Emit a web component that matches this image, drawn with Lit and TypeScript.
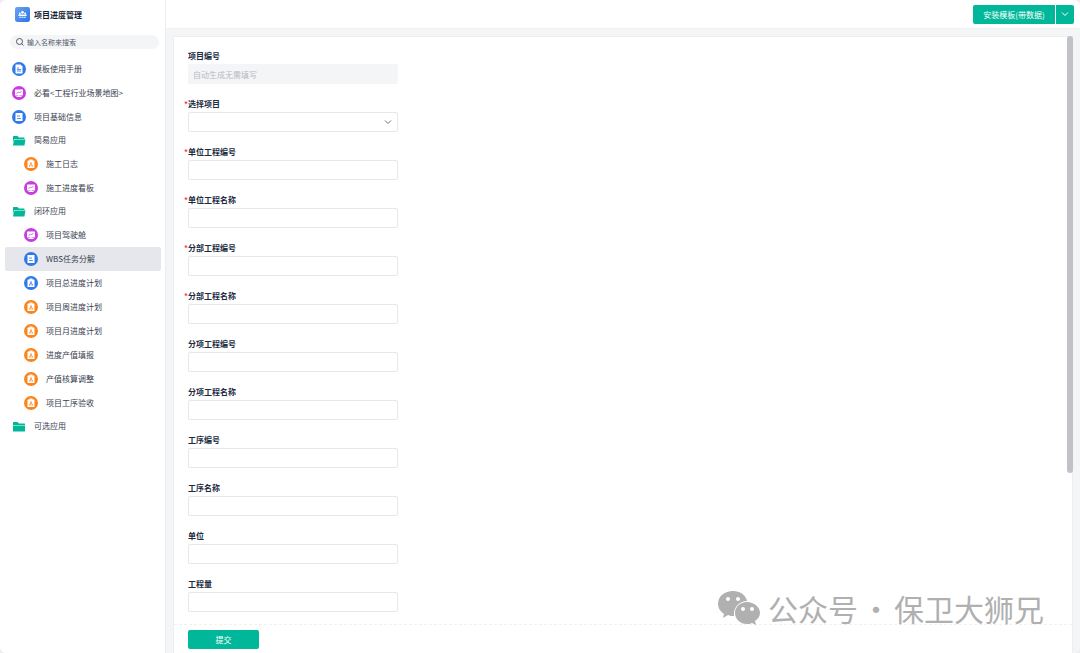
import { LitElement, html, svg, css } from "lit";
import { customElement, property, state } from "lit/decorators.js";
import { classMap } from "lit/directives/class-map.js";

type IconKind = "page" | "doc" | "board" | "flow" | "flowBlue";
interface NavEntry { label: string; icon: IconKind; }
interface NavGroup { label: string; open: boolean; items: NavEntry[]; }

const TOP: NavEntry[] = [
  { label: "模板使用手册", icon: "page" },
  { label: "必看<工程行业场景地图>", icon: "board" },
  { label: "项目基础信息", icon: "doc" },
];

const GROUPS: NavGroup[] = [
  { label: "简易应用", open: true, items: [
    { label: "施工日志", icon: "flow" },
    { label: "施工进度看板", icon: "board" },
  ] },
  { label: "闭环应用", open: true, items: [
    { label: "项目驾驶舱", icon: "board" },
    { label: "WBS任务分解", icon: "doc" },
    { label: "项目总进度计划", icon: "flowBlue" },
    { label: "项目周进度计划", icon: "flow" },
    { label: "项目月进度计划", icon: "flow" },
    { label: "进度产值填报", icon: "flow" },
    { label: "产值核算调整", icon: "flow" },
    { label: "项目工序验收", icon: "flow" },
  ] },
  { label: "可选应用", open: false, items: [] },
];

interface Field { label: string; required?: boolean; kind?: "auto" | "select"; }
const FIELDS: Field[] = [
  { label: "项目编号", kind: "auto" },
  { label: "选择项目", required: true, kind: "select" },
  { label: "单位工程编号", required: true },
  { label: "单位工程名称", required: true },
  { label: "分部工程编号", required: true },
  { label: "分部工程名称", required: true },
  { label: "分项工程编号" },
  { label: "分项工程名称" },
  { label: "工序编号" },
  { label: "工序名称" },
  { label: "单位" },
  { label: "工程量" },
];

const FONT = css`
  * { box-sizing: border-box; }
  button, input, select { font-family: inherit; margin: 0; }
`;

@customElement("nav-icon")
class NavIcon extends LitElement {
  @property() kind: IconKind | "folder" | "folderOpen" = "doc";

  static styles = css`
    :host { display: flex; flex: none; width: 14px; height: 14px; align-items: center; justify-content: center; }
    svg { display: block; width: 14px; height: 14px; }
    .blue { fill: #2f7ae8; }
    .purple { fill: #c63ee0; }
    .orange { fill: #fb841c; }
    .green { fill: #00b899; }
    .white { fill: #fff; }
    .line { fill: none; stroke-width: 1.6; }
    .s-blue { stroke: #2f7ae8; }
    .s-purple { stroke: #c63ee0; }
    .s-orange { stroke: #fb841c; }
  `;

  render() {
    switch (this.kind) {
      case "folder":
      case "folderOpen":
        return html`<svg viewBox="0 0 28 28" aria-hidden="true">${this.kind === "folder"
          ? svg`<path class="green" d="M2 5q0-1 1-1h8l3 3h11q1 0 1 1v2H2z"/><path class="green" d="M2 11h24v11q0 1-1 1H3q-1 0-1-1z"/>`
          : svg`<path class="green" d="M2 5q0-1 1-1h8l3 3h10q1 0 1 1v2H5q-1 0-1 1l-2 8z"/><path class="green" d="M5 11h22l-2 11q0 1-1 1H3q-1 0-1-1z"/>`}</svg>`;
      case "board":
        return html`<svg viewBox="0 0 28 28" aria-hidden="true">
          <circle class="purple" cx="14" cy="14" r="14"/>
          <path class="white" d="M7 7h14q1 0 1 1v10q0 1-1 1h-6v1h4v2H9v-2h4v-1H7q-1 0-1-1V8q0-1 1-1z"/>
          <path class="line s-purple" d="M9 15l4-3 2 2 4-4"/></svg>`;
      case "flow":
      case "flowBlue": {
        const blue = this.kind === "flowBlue";
        return html`<svg viewBox="0 0 28 28" aria-hidden="true">
          <circle class=${blue ? "blue" : "orange"} cx="14" cy="14" r="14"/>
          <path class="white" d="M8 7h3V5h6v2h3q1 0 1 1v13q0 1-1 1H8q-1 0-1-1V8q0-1 1-1z"/>
          <path class="line ${blue ? "s-blue" : "s-orange"}" d="M14 10v4M14 13l-3 5M14 13l3 5M10 18h3M15 18h3"/></svg>`;
      }
      case "page":
        return html`<svg viewBox="0 0 28 28" aria-hidden="true">
          <circle class="blue" cx="14" cy="14" r="14"/>
          <path class="white" d="M8 5h9l4 4v13q0 1-1 1H8q-1 0-1-1V6q0-1 1-1z"/>
          <path class="line s-blue" d="M10 12h4M10 15h8M10 18h8"/></svg>`;
      default:
        return html`<svg viewBox="0 0 28 28" aria-hidden="true">
          <circle class="blue" cx="14" cy="14" r="14"/>
          <path class="white" d="M8 6h12q1 0 1 1v14q0 1-1 1H8q-1 0-1-1V7q0-1 1-1z"/>
          <path class="line s-blue" d="M10 12h6M10 17h8"/></svg>`;
    }
  }
}

@customElement("side-nav")
class SideNav extends LitElement {
  @state() private current = "WBS任务分解";

  static styles = [FONT, css`
    :host { display: flex; flex-direction: column; background: #fff; border-right: 1px solid #eceef0; }
    .brand { display: flex; align-items: center; gap: 4px; height: 29px; padding-left: 15px; font-size: 8px; font-weight: 700; color: #141e31; }
    .brand svg { width: 15px; height: 15px; }
    .search { display: flex; align-items: center; gap: 3px; height: 14px; margin: 6px 6px 8px 10px; padding: 0 6px; border-radius: 7px; background: #f4f5f7; }
    .search svg { flex: none; width: 8px; height: 8px; fill: none; stroke: #525967; }
    .search input { flex: 1; min-width: 0; height: 14px; padding: 0; border: 0; outline: 0; background: none; font-size: 7px; color: #141e31; }
    .search input::placeholder { color: #525967; opacity: 1; }
    ul { list-style: none; margin: 0; padding: 0; }
    .tree { padding: 0 4px 0 5px; }
    .row { display: flex; align-items: center; gap: 8px; height: 24px; padding-left: 7px; border-radius: 2px; font-size: 8px; color: #38404f; text-decoration: none; white-space: nowrap; }
    .row span { padding-bottom: 2px; }
    .row.child { padding-left: 19px; }
    .row.folder { height: 23px; }
    .row.current { background: #e6e7ec; }
  `];

  private link(e: NavEntry, child: boolean) {
    const on = e.label === this.current;
    return html`<li><a href="#" class=${classMap({ row: true, child, current: on })}
      @click=${(ev: Event) => { ev.preventDefault(); this.current = e.label; }}>
      <nav-icon kind=${e.icon}></nav-icon><span>${e.label}</span></a></li>`;
  }

  render() {
    return html`
      <div class="brand">
        <svg viewBox="0 0 28 28" aria-hidden="true">
          <defs><linearGradient id="g" x2="1" y2="1"><stop stop-color="#68a3f5"/><stop offset="1" stop-color="#2f73e6"/></linearGradient></defs>
          <rect width="28" height="28" rx="4" fill="url(#g)"/>
          <g fill="#fff"><circle cx="14" cy="10" r="2.5"/><circle cx="9" cy="12" r="1.8"/><circle cx="19" cy="12" r="1.8"/><path d="M7 14h14l1 3H6zM8 18h3v2H8zM12 18h4v2h-4zM17 18h3v2h-3z"/></g>
        </svg>
        <span>项目进度管理</span>
      </div>
      <label class="search">
        <svg viewBox="0 0 16 16" aria-hidden="true"><circle cx="7" cy="7" r="6" stroke-width="2"/><path d="M11 11l4 4" stroke-width="2"/></svg>
        <input type="search" placeholder="输入名称来搜索" aria-label="输入名称来搜索">
      </label>
      <nav><ul class="tree">
        ${TOP.map((e) => this.link(e, false))}
        ${GROUPS.map((g) => html`<li>
          <a href="#" class="row folder"><nav-icon kind=${g.open ? "folderOpen" : "folder"}></nav-icon><span>${g.label}</span></a>
          ${g.items.length ? html`<ul>${g.items.map((e) => this.link(e, true))}</ul>` : ""}
        </li>`)}
      </ul></nav>`;
  }
}

@customElement("entry-form")
class EntryForm extends LitElement {
  static styles = [FONT, css`
    :host { display: flex; flex-direction: column; min-height: 0; background: #fff; border: 1px solid #eceef0; border-bottom: 0; }
    form { display: flex; flex-direction: column; flex: 1; min-height: 0; }
    .fields { flex: 1; min-height: 0; overflow: hidden; padding: 13px 14px 0; }
    .field { position: relative; display: flex; flex-direction: column; gap: 2px; width: 210px; max-width: 100%; margin-bottom: 14px; }
    label { height: 12px; line-height: 12px; font-size: 8px; font-weight: 700; color: #202a3e; }
    .star { position: absolute; left: -4px; top: 0; color: #ff3b3f; }
    .box { width: 100%; height: 20px; padding: 0 4px; border: 1px solid #e6e7ea; border-radius: 2px; background: #fff; font-size: 8px; color: #202a3e; outline: 0; }
    .box:disabled { border-color: #f4f5f7; background: #f4f5f7; }
    .box::placeholder { color: #b5b9c0; opacity: 1; }
    .pick { display: grid; align-items: center; }
    .pick > * { grid-area: 1 / 1; }
    select.box { appearance: none; }
    .pick svg { justify-self: end; margin-right: 6px; width: 8px; height: 8px; fill: none; stroke: #6b7280; stroke-width: 2; pointer-events: none; }
    footer { flex: none; padding: 5px 14px 4px; border-top: 1px dashed #f0f1f3; }
    .submit { display: block; width: 71px; height: 19px; padding: 0; border: 0; border-radius: 2px; background: #00b899; color: #fff; font-size: 8px; }
  `];

  private control(f: Field, id: string) {
    if (f.kind === "auto") return html`<input class="box" id=${id} disabled placeholder="自动生成无需填写">`;
    if (f.kind === "select") return html`<div class="pick"><select class="box" id=${id}><option></option></select>
      <svg viewBox="0 0 16 16" aria-hidden="true"><path d="M2 5l6 6 6-6"/></svg></div>`;
    return html`<input class="box" id=${id} type="text">`;
  }

  render() {
    return html`<form @submit=${(e: Event) => e.preventDefault()}>
      <div class="fields">${FIELDS.map((f, i) => html`<div class="field">
        <label for="f${i}">${f.required ? html`<span class="star">*</span>` : ""}${f.label}</label>
        ${this.control(f, `f${i}`)}
      </div>`)}</div>
      <footer><button class="submit" type="submit">提交</button></footer>
    </form>`;
  }
}

@customElement("app-root")
class AppRoot extends LitElement {
  static styles = [FONT, css`
    :host { display: block; height: 100vh; background: #eceef0; font-family: "Noto Sans CJK SC", sans-serif; }
    .shell { position: relative; display: grid; grid-template-columns: 166px 1fr; height: 100%; overflow: hidden; border-radius: 6px; background: #f4f5f7; }
    .main { display: flex; flex-direction: column; min-width: 0; min-height: 0; }
    header { display: flex; flex: none; justify-content: flex-end; align-items: center; gap: 1px; height: 29px; padding-right: 6px; background: #fff; border-bottom: 1px solid #f0f1f3; }
    header button { display: flex; align-items: center; justify-content: center; height: 19px; padding: 0; border: 0; background: #00b899; color: #fff; font-size: 8px; }
    .install { width: 82px; border-radius: 2px 0 0 2px; }
    .more { width: 18px; border-radius: 0 2px 2px 0; }
    .more svg { width: 8px; height: 8px; fill: none; stroke: #fff; stroke-width: 2; }
    .body { position: relative; display: flex; flex: 1; flex-direction: column; min-height: 0; padding: 7px 7px 0; }
    entry-form { flex: 1; }
    .thumb { position: absolute; top: 7px; right: 7px; width: 6px; height: 70%; border-radius: 3px; background: #c0c2c7; }
    .mark { position: absolute; right: 36px; bottom: 23px; display: flex; align-items: center; color: #b0b0b0; font-size: 30px; line-height: 44px; white-space: nowrap; pointer-events: none; }
    .mark svg { width: 42px; height: 36px; margin-right: 8px; fill: #b0b0b0; }
    .dot { width: 36px; text-align: center; }
  `];

  render() {
    return html`<div class="shell">
      <side-nav></side-nav>
      <div class="main">
        <header>
          <button class="install" type="button">安装模板(带数据)</button>
          <button class="more" type="button" aria-label="更多"><svg viewBox="0 0 16 16" aria-hidden="true"><path d="M2 5l6 6 6-6"/></svg></button>
        </header>
        <div class="body">
          <entry-form></entry-form>
          <div class="thumb"></div>
        </div>
      </div>
      <div class="mark">
        <svg viewBox="0 0 42 36" aria-hidden="true">
          <path d="M15 1C7 1 0 6 0 14c0 4 2 7 6 10l-1 4 5-3c2 1 4 1 6 1C15 18 21 11 29 11 28 5 22 1 15 1z"/>
          <path d="M29 12c-7 0-12 5-12 11s5 11 12 11c2 0 3 0 5-1l4 2-1-4c3-2 5-5 5-8 0-6-6-11-13-11z"/>
          <g fill="#fff"><circle cx="10" cy="9" r="2"/><circle cx="20" cy="9" r="2"/><circle cx="25" cy="19" r="2"/><circle cx="34" cy="19" r="2"/></g>
        </svg>
        <span>公众号</span><span class="dot">·</span><span>保卫大狮兄</span>
      </div>
    </div>`;
  }
}
